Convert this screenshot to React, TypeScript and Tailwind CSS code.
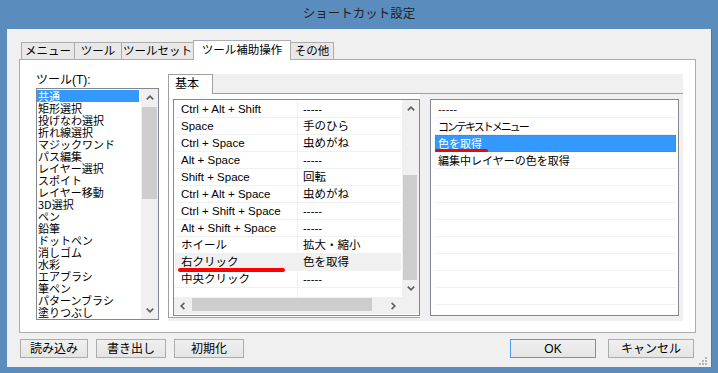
import React from "react";

const Up = () => (
  <svg width="8" height="5" viewBox="0 0 8 5">
    <path d="M0.8 4.4 L4 1.2 L7.2 4.4" fill="none" stroke="#606060" strokeWidth="1.7" />
  </svg>
);
const Down = () => (
  <svg width="8" height="5" viewBox="0 0 8 5">
    <path d="M0.8 0.6 L4 3.8 L7.2 0.6" fill="none" stroke="#606060" strokeWidth="1.7" />
  </svg>
);
const Left = () => (
  <svg width="5" height="8" viewBox="0 0 5 8">
    <path d="M4.4 0.8 L1.2 4 L4.4 7.2" fill="none" stroke="#606060" strokeWidth="1.7" />
  </svg>
);
const Right = () => (
  <svg width="5" height="8" viewBox="0 0 5 8">
    <path d="M0.6 0.8 L3.8 4 L0.6 7.2" fill="none" stroke="#606060" strokeWidth="1.7" />
  </svg>
);

const tools = [
  "共通",
  "矩形選択",
  "投げなわ選択",
  "折れ線選択",
  "マジックワンド",
  "パス編集",
  "レイヤー選択",
  "スポイト",
  "レイヤー移動",
  "3D選択",
  "ペン",
  "鉛筆",
  "ドットペン",
  "消しゴム",
  "水彩",
  "エアブラシ",
  "筆ペン",
  "パターンブラシ",
  "塗りつぶし",
  "グラデーション",
];

const rows: [string, string][] = [
  ["Ctrl + Alt + Shift", "-----"],
  ["Space", "手のひら"],
  ["Ctrl + Space", "虫めがね"],
  ["Alt + Space", "-----"],
  ["Shift + Space", "回転"],
  ["Ctrl + Alt + Space", "虫めがね"],
  ["Ctrl + Shift + Space", "-----"],
  ["Alt + Shift + Space", "-----"],
  ["ホイール", "拡大・縮小"],
  ["右クリック", "色を取得"],
  ["中央クリック", "-----"],
  ["", ""],
];

const actions = ["-----", "コンテキストメニュー", "色を取得", "編集中レイヤーの色を取得", "", "", "", "", "", "", "", "", ""];

const tabs = [
  { label: "メニュー", w: "w-[54px]" },
  { label: "ツール", w: "w-[48px]" },
  { label: "ツールセット", w: "w-[73px]" },
  { label: "ツール補助操作", w: "w-[98px]", active: true },
  { label: "その他", w: "w-[44px]" },
];

function Btn({ label, w, primary }: { label: string; w: string; primary?: boolean }) {
  return (
    <div
      className={`${w} h-[19px] flex items-center justify-center border bg-gradient-to-b from-[#f0f0f0] to-[#e5e5e5] text-[12px] leading-[14px] text-black ${
        primary ? "border-[#4a9de6]" : "border-[#acacac]"
      }`}
    >
      {label}
    </div>
  );
}

export default function App() {
  return (
    <div className="relative w-[718px] h-[373px] bg-[#5a8dbe] flex flex-col font-['Liberation_Sans','Noto_Sans_CJK_JP',sans-serif] overflow-hidden">
      {/* title bar */}
      <div className="h-[29px] flex items-center justify-center text-[12.5px] leading-[16px] text-[#222] pb-[1px]">
        ショートカット設定
      </div>

      {/* client area */}
      <div className="relative ml-[7px] w-[704px] h-[338px] bg-[#f0f0f0] flex flex-col pt-[11px]">
        {/* tabs */}
        <div className="h-[19px] flex items-end pl-[14px]">
          {tabs.map((t, i) =>
            t.active ? (
              <div
                key={i}
                className={`${t.w} relative z-10 -ml-px -mb-px h-[20px] bg-white border border-b-0 border-[#acacac] flex items-center justify-center text-[11.5px] leading-[14px] text-black pb-[1px]`}
              >
                {t.label}
              </div>
            ) : (
              <div
                key={i}
                className={`${t.w} ${i === 0 ? "" : "-ml-px"} h-[17px] bg-[#e8e8e8] border border-b-0 border-[#acacac] flex items-center justify-center text-[11.5px] leading-[14px] text-black`}
              >
                {t.label}
              </div>
            )
          )}
        </div>

        {/* tab panel */}
        <div className="ml-[12px] w-[677px] h-[274px] bg-white border border-[#acacac] flex">
          {/* left column */}
          <div className="pl-[16px] pt-[12px] flex flex-col">
            <div className="h-[14px] pt-[1px] text-[12px] leading-[14px] text-black">ツール(T):</div>
            <div className="mt-[2px] w-[123px] h-[232px] border border-[#828790] bg-white flex">
              <div className="flex-1 overflow-hidden pt-[1px] font-['Noto_Sans_CJK_JP',sans-serif]">
                {tools.map((t, i) => (
                  <div
                    key={i}
                    className={`w-[102px] h-[12px] pl-[1px] text-[11px] leading-[12px] whitespace-nowrap ${
                      i === 0 ? "bg-[#3399ff] text-white" : "text-black"
                    }`}
                  >
                    {t}
                  </div>
                ))}
              </div>
              <div className="w-[17px] bg-[#f0f0f0] flex flex-col">
                <div className="h-[17px] flex items-center justify-center">
                  <Up />
                </div>
                <div className="flex-1 flex flex-col">
                  <div className="mt-[1px] ml-[1px] w-[15px] h-[92px] bg-[#cdcdcd]" />
                </div>
                <div className="h-[17px] flex items-center justify-center">
                  <Down />
                </div>
              </div>
            </div>
          </div>

          {/* right region */}
          <div className="ml-[9px] mt-[14px] w-[515px] h-[247px] bg-[#f0f0f0] flex flex-col">
            <div className="h-[20px] flex">
              <div className="w-[45px] h-[20px] bg-white border border-b-0 border-[#a0a0a0] pl-[6px] text-[12px] leading-[18px] text-black">
                基本
              </div>
              <div className="flex-1 h-[20px] border-b border-[#a0a0a0]" />
            </div>
            <div className="flex">
              {/* left page */}
              <div className="w-[252px] h-[224px] bg-white border-l border-b border-[#a0a0a0] pl-[4px] pt-[5px]">
                <div className="w-[247px] h-[217px] border border-[#828790] bg-white flex flex-col">
                  <div className="h-[197px] flex">
                    <div className="flex-1 overflow-hidden pt-[1px] pl-[1px]">
                      {rows.map(([k, v], i) => (
                        <div
                          key={i}
                          className={`w-[226px] h-[17px] flex border-b border-[#f0f0f0] text-[11.5px] leading-[15px] text-black ${
                            i === 9 ? "bg-[#f0f0f0]" : ""
                          }`}
                        >
                          <div className="w-[123px] pt-[1px] pl-[6px] border-r border-[#f0f0f0] whitespace-nowrap overflow-hidden">
                            {k}
                          </div>
                          <div className="flex-1 pt-[1px] pl-[5px] whitespace-nowrap">{v}</div>
                        </div>
                      ))}
                    </div>
                    <div className="w-[17px] bg-[#f0f0f0] flex flex-col">
                      <div className="h-[17px] flex items-center justify-center">
                        <Up />
                      </div>
                      <div className="flex-1 flex flex-col">
                        <div className="mt-[58px] ml-[1px] w-[14px] h-[105px] bg-[#cdcdcd]" />
                      </div>
                      <div className="h-[17px] flex items-center justify-center">
                        <Down />
                      </div>
                    </div>
                  </div>
                  <div className="h-[17px] flex">
                    <div className="flex-1 bg-[#f0f0f0] flex">
                      <div className="w-[17px] flex items-center justify-center">
                        <Left />
                      </div>
                      <div className="flex-1 flex">
                        <div className="ml-[1px] mt-[1px] w-[180px] h-[13px] bg-[#cdcdcd]" />
                      </div>
                      <div className="w-[17px] flex items-center justify-center">
                        <Right />
                      </div>
                    </div>
                    <div className="w-[17px] bg-[#f0f0f0]" />
                  </div>
                </div>
              </div>

              {/* right list */}
              <div className="ml-[10px] mt-[5px] w-[249px] h-[217px] border border-[#828790] bg-white overflow-hidden pt-[1px] pl-[4px] font-['Noto_Sans_CJK_JP',sans-serif]">
                {actions.map((a, i) => (
                  <div
                    key={i}
                    className={`w-[241px] h-[17px] text-[11px] whitespace-nowrap ${
                      i === 2
                        ? "bg-[#3399ff] text-white border border-dotted border-[#cc6600] pl-[2px] pt-[1px] leading-[13px]"
                        : "text-black border-b border-[#f0f0f0] pl-[3px] pt-[1px] leading-[15px]"
                    } ${i === 1 ? "tracking-[-2px]" : ""}`}
                  >
                    {a}
                  </div>
                ))}
              </div>
            </div>
          </div>
        </div>

        {/* buttons */}
        <div className="mt-[6px] h-[19px] flex pl-[13px] pr-[17px]">
          <Btn label="読み込み" w="w-[68px]" />
          <div className="ml-[8px]">
            <Btn label="書き出し" w="w-[70px]" />
          </div>
          <div className="ml-[8px]">
            <Btn label="初期化" w="w-[70px]" />
          </div>
          <div className="flex-1" />
          <Btn label="OK" w="w-[86px]" primary />
          <div className="ml-[12px]">
            <Btn label="キャンセル" w="w-[86px]" />
          </div>
        </div>

        {/* resize grip */}
        <svg className="absolute right-[4px] bottom-[2px]" width="8" height="8" viewBox="0 0 8 8">
          <rect x="6" y="0" width="2" height="2" fill="#b4b4b4" />
          <rect x="3" y="3" width="2" height="2" fill="#b4b4b4" />
          <rect x="6" y="3" width="2" height="2" fill="#b4b4b4" />
          <rect x="0" y="6" width="2" height="2" fill="#b4b4b4" />
          <rect x="3" y="6" width="2" height="2" fill="#b4b4b4" />
          <rect x="6" y="6" width="2" height="2" fill="#b4b4b4" />
        </svg>
      </div>
      <div className="absolute left-[711px] top-[29px] w-px h-[338px] bg-[#4a7aa8]" />

      {/* red annotation underlines */}
      <div className="absolute left-[178px] top-[268px] w-[107px] h-[4px] rounded-full bg-[#ff0000]" />
      <div className="absolute left-[435px] top-[149px] w-[53px] h-[3px] rounded-full bg-[#ff0000]" />
    </div>
  );
}
